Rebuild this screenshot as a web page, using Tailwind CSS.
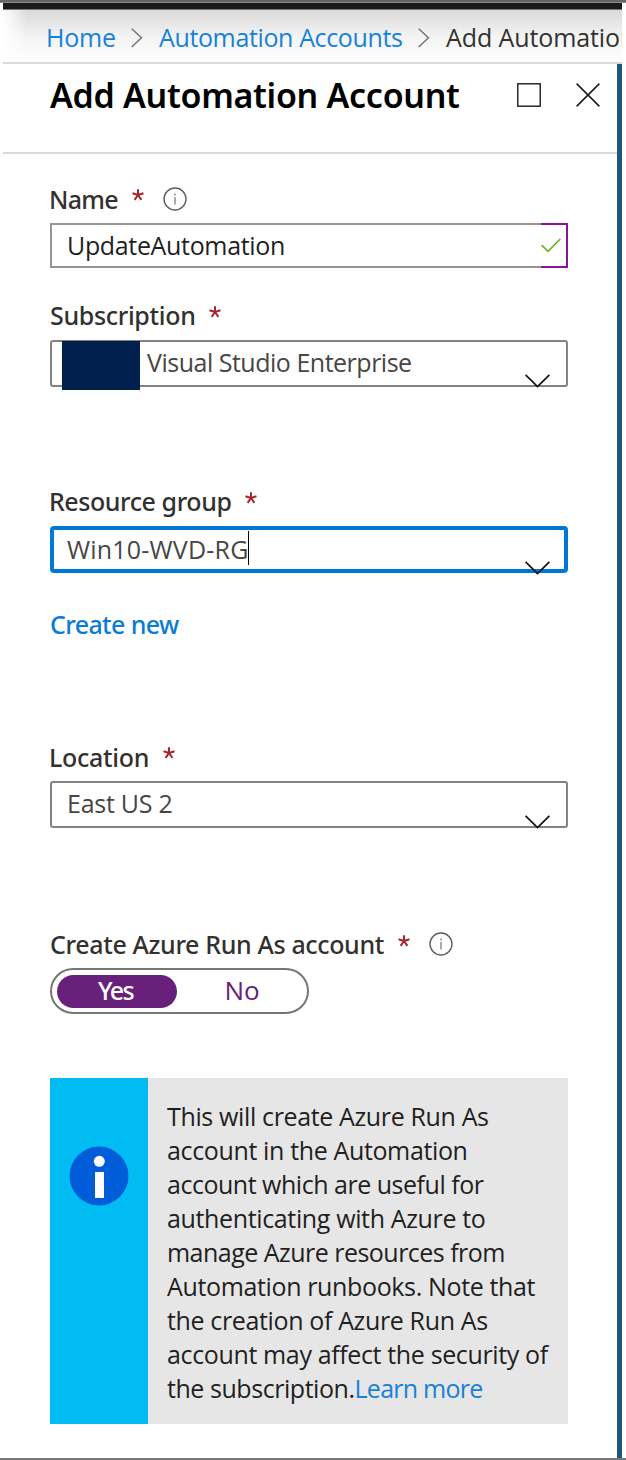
<!DOCTYPE html>
<html lang="en">
<head>
<meta charset="utf-8">
<title>Add Automation Account</title>
<script src="https://cdn.jsdelivr.net/npm/@tailwindcss/browser@4"></script>
</head>
<body class="bg-white">
<div class="flex h-[1460px] w-[626px] flex-col overflow-hidden bg-white font-['Open_Sans','Noto_Sans',sans-serif] text-[25px] leading-[34px] text-[#323130]">
  <div class="h-[3px] shrink-0 border-b border-[#8a8a8a] bg-[#666666]"></div>
  <div class="ml-[3px] h-[7px] w-[619px] shrink-0 border-b border-[#777777] bg-[#1b1b1b]"></div>

  <!-- Breadcrumb -->
  <nav class="relative ml-[3px] flex h-[54px] w-[619px] shrink-0 items-start overflow-hidden border-b-2 border-[#d9d9d9] bg-linear-to-b from-[#d9d9d9] via-[#f3f3f3] to-white whitespace-nowrap">
    <div class="absolute inset-y-0 left-0 w-6 bg-linear-to-r from-white to-transparent"></div>
    <a class="relative mt-[10px] ml-[43px] w-[85px] shrink-0 tracking-[-0.2px] text-[#1581d8]">Home</a>
    <svg class="mt-[18px] h-5 w-[12px] shrink-0" viewBox="0 0 12 20" fill="none" stroke="#6b6b6b" stroke-width="1.3"><path d="M0.7 0.7 10.5 9.8 0.7 19"/></svg>
    <a class="mt-[10px] ml-[16px] w-[262px] shrink-0 tracking-[-0.37px] text-[#1581d8]">Automation Accounts</a>
    <svg class="mt-[18px] -ml-[3px] h-5 w-[12px] shrink-0" viewBox="0 0 12 20" fill="none" stroke="#6b6b6b" stroke-width="1.3"><path d="M0.7 0.7 10.5 9.8 0.7 19"/></svg>
    <span class="mt-[10px] ml-[16px] shrink-0 tracking-[-0.1px]">Add Automation</span>
  </nav>

  <div class="flex min-h-0 grow">
    <div class="ml-[3px] flex w-[614px] shrink-0 flex-col">
      <!-- Blade header -->
      <header class="flex h-[90px] shrink-0 items-start border-b-2 border-[#d9d9d9] pl-[47px]">
        <h1 class="mt-[8px] w-[467px] shrink-0 font-['Noto_Sans',sans-serif] text-[34px] leading-[46px] font-semibold tracking-[-0.3px] whitespace-nowrap text-black">Add Automation Account</h1>
        <svg class="mt-[19px] h-6 w-6 shrink-0" viewBox="0 0 24 24" fill="none" stroke="#1a1a1a" stroke-width="1.4"><rect x="0.8" y="0.8" width="22.4" height="22.4"/></svg>
        <svg class="mt-[19px] ml-[35px] h-6 w-6 shrink-0" viewBox="0 0 24 24" fill="none" stroke="#1a1a1a" stroke-width="1.5"><path d="M0.6 0.6 23.4 23.4M23.4 0.6 0.6 23.4"/></svg>
      </header>

      <form class="flex w-[565px] flex-col pl-[47px]">
        <label class="mt-[28px] flex h-[34px] items-start font-['Noto_Sans',sans-serif] font-medium whitespace-nowrap">
          <span class="-ml-px tracking-[-0.7px]">Name</span>
          <svg class="mt-[7px] ml-[14px] h-3 w-3" viewBox="0 0 12 12" fill="none" stroke="#a4262c" stroke-width="2"><path d="M6 6V.2M6 6 .5 4.2M6 6l5.500-1.800M6 6 2.600 10.800M6 6l3.400 4.800"/></svg>
          <svg class="mt-[5px] ml-[19px] h-6 w-6" viewBox="0 0 24 24" fill="none" stroke="#605e5c" stroke-width="1.400"><circle cx="12" cy="12" r="11"/><path d="M12 10v7.500M12 6.500v2" stroke="#8a8886"/></svg>
        </label>
        <div class="mt-[7px] flex h-[45px] w-[518px] shrink-0">
          <div class="w-[491px] border-2 border-r-0 border-[#979593] pl-[15px] leading-[41px] tracking-[-0.34px] text-[#1f1f1f]">UpdateAutomation</div>
          <div class="w-[27px] border-2 border-l-0 border-[#881798] pt-[13px]">
            <svg class="h-[15px] w-5" viewBox="0 0 20 15" fill="none" stroke="#6bb423" stroke-width="1.700"><path d="M.6 7.200 7 13.400 19.300 1"/></svg>
          </div>
        </div>

        <label class="mt-[30px] flex h-[34px] items-start font-['Noto_Sans',sans-serif] font-medium whitespace-nowrap">
          <span class="tracking-[-0.33px]">Subscription</span>
          <svg class="mt-[8px] ml-[13px] h-3 w-3" viewBox="0 0 12 12" fill="none" stroke="#a4262c" stroke-width="2"><path d="M6 6V.2M6 6 .5 4.2M6 6l5.500-1.800M6 6 2.600 10.800M6 6l3.400 4.800"/></svg>
        </label>
        <div class="relative mt-[8px] flex h-[47px] w-[518px] shrink-0 rounded-[3px] border-2 border-[#84827f] text-[#484644]">
          <div class="absolute -top-[1px] left-[10px] h-[49px] w-[78px] bg-[#00204d]"></div>
          <span class="ml-[95px] leading-[40px] tracking-[-0.49px] whitespace-nowrap">Visual Studio Enterprise</span>
          <svg class="absolute top-[32px] left-[473px] h-[14px] w-[25px]" viewBox="0 0 25 14" fill="none" stroke="#111111" stroke-width="1.700"><path d="M.6.8 12.500 12.600 24.400.8"/></svg>
        </div>

        <label class="mt-[97px] flex h-[34px] items-start font-['Noto_Sans',sans-serif] font-medium whitespace-nowrap">
          <span class="-ml-px tracking-[-0.43px]">Resource group</span>
          <svg class="mt-[8px] ml-[14px] h-3 w-3" viewBox="0 0 12 12" fill="none" stroke="#a4262c" stroke-width="2"><path d="M6 6V.2M6 6 .5 4.2M6 6l5.500-1.800M6 6 2.600 10.800M6 6l3.400 4.800"/></svg>
        </label>
        <div class="relative mt-[8px] flex h-[47px] w-[518px] shrink-0 rounded-[4px] border-4 border-[#0078d7] text-[#484644]">
          <span class="ml-[13px] w-[181px] leading-[38px] tracking-[0.2px] whitespace-nowrap">Win10-WVD-RG</span>
          <span class="mt-[1px] h-[34px] w-px bg-black"></span>
          <svg class="absolute top-[31px] left-[471px] h-[14px] w-[25px]" viewBox="0 0 25 14" fill="none" stroke="#111111" stroke-width="1.700"><path d="M.6.8 12.500 12.600 24.400.8"/></svg>
        </div>
        <a class="mt-[34px] h-[34px] font-['Noto_Sans',sans-serif] font-medium tracking-[-0.62px] text-[#0a7bd6]">Create new</a>

        <label class="mt-[99px] flex h-[34px] items-start font-['Noto_Sans',sans-serif] font-medium whitespace-nowrap">
          <span class="-ml-px tracking-[-0.3px]">Location</span>
          <svg class="mt-[7px] ml-[14px] h-3 w-3" viewBox="0 0 12 12" fill="none" stroke="#a4262c" stroke-width="2"><path d="M6 6V.2M6 6 .5 4.2M6 6l5.500-1.800M6 6 2.600 10.800M6 6l3.400 4.800"/></svg>
        </label>
        <div class="relative mt-[7px] flex h-[47px] w-[518px] shrink-0 rounded-[3px] border-2 border-[#84827f] text-[#484644]">
          <span class="ml-[15px] leading-[41px] tracking-[-0.25px] whitespace-nowrap">East US 2</span>
          <svg class="absolute top-[32px] left-[473px] h-[14px] w-[25px]" viewBox="0 0 25 14" fill="none" stroke="#111111" stroke-width="1.700"><path d="M.6.8 12.500 12.600 24.400.8"/></svg>
        </div>

        <label class="mt-[99px] flex h-[34px] items-start font-['Noto_Sans',sans-serif] font-medium whitespace-nowrap">
          <span class="tracking-[-0.36px]">Create Azure Run As account</span>
          <svg class="mt-[8px] ml-[14px] h-3 w-3" viewBox="0 0 12 12" fill="none" stroke="#a4262c" stroke-width="2"><path d="M6 6V.2M6 6 .5 4.2M6 6l5.500-1.800M6 6 2.600 10.800M6 6l3.400 4.800"/></svg>
          <svg class="mt-[5px] ml-[19px] h-6 w-6" viewBox="0 0 24 24" fill="none" stroke="#605e5c" stroke-width="1.400"><circle cx="12" cy="12" r="11"/><path d="M12 10v7.500M12 6.500v2" stroke="#8a8886"/></svg>
        </label>
        <div class="mt-[7px] flex h-[46px] w-[259px] shrink-0 items-center rounded-full border-2 border-[#767676] pl-[5px] leading-[31px]">
          <span class="h-[33px] w-[120px] rounded-full bg-[#68217a] pr-[3px] text-center font-['Noto_Sans',sans-serif] font-medium tracking-[-1.7px] text-white">Yes</span>
          <span class="h-[33px] w-[130px] text-center text-[26px] text-[#68217a]">No</span>
        </div>

        <div class="mt-[64px] flex h-[346px] w-[518px] shrink-0 bg-[#e6e6e6]">
          <div class="w-[98px] shrink-0 bg-[#00bcf2] pt-[68px] pl-[19px]">
            <svg class="h-[60px] w-[60px]" viewBox="0 0 60 60"><circle cx="30" cy="30" r="29.500" fill="#015cda"/><circle cx="30.300" cy="15.300" r="5.500" fill="#fff"/><path d="M26 26h9v26h-9z" fill="#fff"/></svg>
          </div>
          <p class="pt-[21px] pl-[19px] tracking-[-0.36px] whitespace-nowrap text-[#1f1f1f]">This will create Azure Run As<br>account in the Automation<br><span class="tracking-[-0.48px]">account which are useful for</span><br>authenticating with Azure to<br><span class="tracking-[-0.52px]">manage Azure resources from</span><br>Automation runbooks. Note that<br>the creation of Azure Run As<br>account may affect the security of<br><span class="tracking-[-0.45px]">the subscription.</span><a class="tracking-[-0.75px] text-[#1581d8]">Learn more</a></p>
        </div>
      </form>
    </div>
    <div class="w-[5px] shrink-0 bg-[#1e5878]"></div>
  </div>
  <div class="h-[2px] shrink-0 bg-[#777777]"></div>
</div>
</body>
</html>
